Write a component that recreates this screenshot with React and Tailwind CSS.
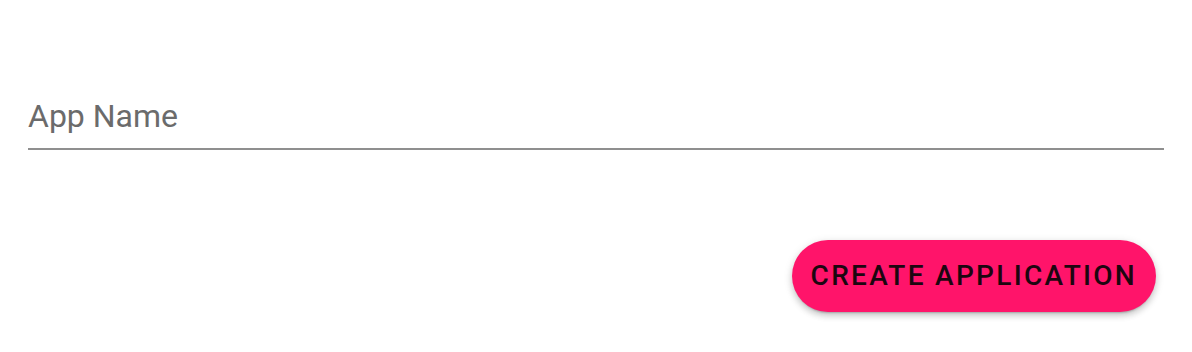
import React, { useState } from 'react';

const App = () => {
    const [name, setName] = useState('');

    return (
        <div className='w-[1192px] h-[352px] bg-white' style={{ fontFamily: 'Roboto, "Liberation Sans", sans-serif' }}>
            <div className='px-[28px] pt-[97px]'>
                <div className='border-b-2 border-[#8f8f8f] pb-[13px]'>
                    <input
                        value={name}
                        onChange={(e) => setName(e.target.value)}
                        placeholder='App Name'
                        className='block w-full h-[38px] text-[32px] leading-[38px] text-[#222] placeholder:text-[#6b6b6b] outline-none bg-transparent'
                    />
                </div>
            </div>
            <div className='flex justify-end pr-[36px] mt-[90px]'>
                <button className='h-[72px] px-[19px] rounded-full bg-[#ff146a] text-[28px] leading-[72px] font-medium tracking-[2.3px] text-[#1c0610] uppercase shadow-[0_3px_2px_-2px_rgba(0,0,0,0.2),0_4px_6px_0_rgba(0,0,0,0.14),0_2px_10px_0_rgba(0,0,0,0.12)]'>
                    Create Application
                </button>
            </div>
        </div>
    );
};

export default App;
